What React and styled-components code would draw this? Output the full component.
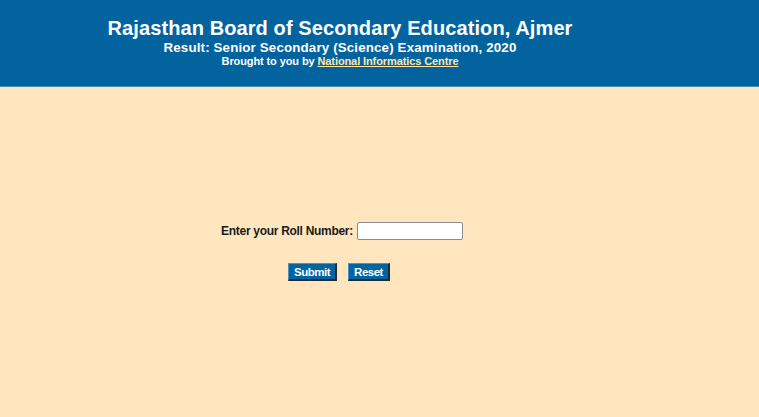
import styled, { createGlobalStyle } from "styled-components";

const GlobalStyle = createGlobalStyle`
  html, body {
    margin: 0;
    padding: 0;
    background: #ffe6bf;
    font-family: "Liberation Sans", Arial, sans-serif;
  }
`;

const Page = styled.div`
  width: 759px;
  height: 417px;
  background: #ffe6bf;
  display: flex;
  flex-direction: column;
`;

const Header = styled.header`
  height: 87px;
  background: #03639f;
  border-bottom: 1px solid #4a8fb8;
  box-sizing: border-box;
  padding-top: 17px;
`;

const HeaderInner = styled.div`
  width: 680px;
  text-align: center;
  color: #fff;
  font-weight: bold;
`;

const Title = styled.div`
  font-size: 20px;
  line-height: 23px;
  letter-spacing: 0.1px;
`;

const SubTitle = styled.div`
  font-size: 13.33px;
  line-height: 15px;
  letter-spacing: 0.15px;
`;

const Credit = styled.div`
  font-size: 11px;
  line-height: 13px;
  letter-spacing: -0.1px;

  a {
    color: #ffe6a8;
    text-decoration: underline;
  }
`;

const Main = styled.main`
  width: 684px;
  display: flex;
  flex-direction: column;
  align-items: center;
  padding-top: 135px;
`;

const Row = styled.div`
  display: flex;
  align-items: center;
  gap: 4px;
`;

const Label = styled.label`
  font-size: 12px;
  font-weight: bold;
  letter-spacing: -0.3px;
  color: #1a1a1a;
`;

const Input = styled.input`
  width: 106px;
  height: 18px;
  box-sizing: border-box;
  border: 1px solid #8c8c8c;
  border-radius: 2px;
  background: #fff;
  padding: 0 3px;
`;

const Buttons = styled.div`
  display: flex;
  gap: 11px;
  margin-top: 23px;
  margin-right: 6px;
`;

const Button = styled.button`
  height: 18px;
  box-sizing: border-box;
  padding: 0 5px;
  background: #0064a1;
  color: #fff;
  font-family: "Liberation Sans", Arial, sans-serif;
  font-size: 11.5px;
  font-weight: bold;
  letter-spacing: -0.5px;
  border: 1px solid;
  border-color: #4c8fc0 #1e2b35 #1e2b35 #4c8fc0;
  border-width: 1px 2px 2px 1px;
  cursor: pointer;
`;

export default function App() {
  return (
    <Page>
      <GlobalStyle />
      <Header>
        <HeaderInner>
          <Title>Rajasthan Board of Secondary Education, Ajmer</Title>
          <SubTitle>Result: Senior Secondary (Science) Examination, 2020</SubTitle>
          <Credit>
            Brought to you by <a href="#">National Informatics Centre</a>
          </Credit>
        </HeaderInner>
      </Header>
      <Main>
        <Row>
          <Label htmlFor="roll">Enter your Roll Number:</Label>
          <Input id="roll" type="text" />
        </Row>
        <Buttons>
          <Button type="button">Submit</Button>
          <Button type="button">Reset</Button>
        </Buttons>
      </Main>
    </Page>
  );
}
